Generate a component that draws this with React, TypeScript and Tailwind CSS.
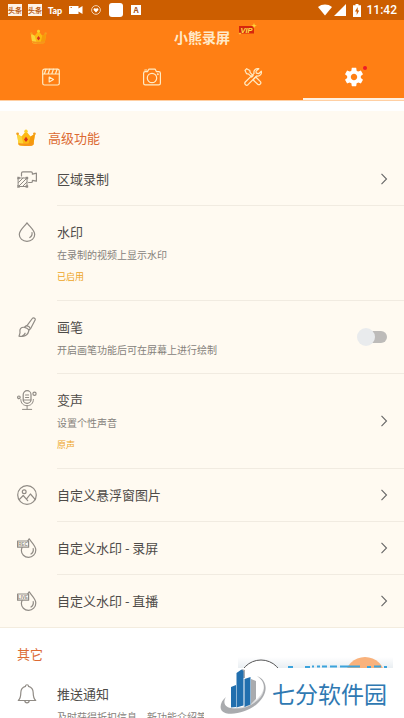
import React, { useState } from "react";

type IconProps = { className?: string };

function Crown({ className }: IconProps) {
  return (
    <svg viewBox="0 0 20 18" className={className} aria-hidden="true">
      <path d="M2.600 15.500 1 5l4.500 2.500L10 2l4.500 5.500L19 5l-1.600 10.500c0 2-14.800 2-14.800 0z" fill="#fdb913" />
      <path d="M2.600 15.500 1 5l4.500 2.500L8 16.800c-3 0-5.400-.4-5.400-1.300z" fill="#fbd53a" />
      <path d="M17.400 15.500 19 5l-4.500 2.500-2.500 9.300c3 0 5.400-.4 5.400-1.300z" fill="#f59a0b" />
      <path d="M2.400 13.800c3.200 1.200 12 1.200 15.200 0l-.3 2c-2.500 1.500-12 1.500-14.600 0z" fill="#f7941d" />
      <circle cx="10" cy="2.300" r="1.700" fill="#fcd02c" />
      <circle cx="1.600" cy="4.800" r="1.400" fill="#f4a01c" />
      <circle cx="18.400" cy="4.800" r="1.400" fill="#f4a01c" />
      <path d="M10 7.800l2 2.600-2 2.600-2-2.600z" fill="#d8341c" />
    </svg>
  );
}

function LineIcon({ className, children }: { className?: string; children: React.ReactNode }) {
  return (
    <svg
      viewBox="0 0 20 20"
      className={className}
      fill="none"
      stroke="currentColor"
      strokeWidth="1.200"
      strokeLinecap="round"
      strokeLinejoin="round"
      aria-hidden="true"
    >
      {children}
    </svg>
  );
}

const icons = {
  region: (
    <>
      <path d="M4.500 7V4.200c0-.9.500-1.400 1.400-1.400h8.200c.9 0 1.300.5 1.300 1.400v1l4-1v8l-4-.9v.9c0 .8-.4 1.300-1.300 1.300h-2.500" />
      <path d="M1.500 9h8.500v8.500H1.500zM1.500 13.500 6 9M1.500 17.500 10 9M5.500 17.500l4.500-4.500" strokeWidth="1" />
      <path d="M.5 8h2v2h-2zM9 8h2v2H9zM.5 16.500h2v2h-2zM9 16.500h2v2H9z" fill="currentColor" strokeWidth=".4" />
    </>
  ),
  drop: (
    <>
      <path d="M10 .8C7.500 4.500 2.300 8.300 2.300 12.400c0 4 3.400 6.900 7.700 6.900s7.700-2.900 7.700-6.900C17.700 8.300 12.500 4.500 10 .8z" />
      <path d="M15 10.500c.4 2.300-.4 4-2.200 5" />
    </>
  ),
  brush: (
    <>
      <path d="M10 8.700 15.300 1.500c.8-1 3.500-.4 2.800 1.500l-4.300 8.300" />
      <path d="M9.200 8.700c1.800.2 3.600 1.300 4.300 3l-1.600 1.200c-1.300-1.500-2.700-2.300-4.400-2.600z" />
      <path d="M7.500 10.300C4 9.800 2.500 12.200 3 14.800c.2 1.600-.5 2.700-1 4.400 3.700.6 9.300.3 9.900-6.300M5.500 18.800c1.500-.6 2.200-1.400 2.600-2.600" />
    </>
  ),
  mic: (
    <>
      <rect x="6.200" y=".7" width="7.800" height="12.600" rx="3.900" />
      <path d="M3.800 9.500c0 4 2.800 6.200 6.300 6.200s6.300-2.200 6.300-6.200M10.100 15.700v3.500M5.500 19.400h9.200M8.500 5h3.200M8.500 7.500h3.200M6.200 10H14" strokeWidth="1" />
      <circle cx="1.900" cy="7.300" r="1.300" />
      <circle cx="17.500" cy="3.800" r="1.600" />
    </>
  ),
  picture: (
    <>
      <circle cx="10" cy="10" r="9.300" />
      <circle cx="7.200" cy="6.800" r="1.900" />
      <path d="m2.200 14.700 4-4.200 3.200 3.700 4-5.200 4.900 5.700M9.400 14.200l1.300 1.500" />
    </>
  ),
  bell: (
    <>
      <path d="M8.500 2.300C8.500.2 11.500.2 11.500 2.300c3.400.8 4.700 3.300 4.700 6.500 0 4.500.8 6.200 2.500 7.700H1.300c1.700-1.500 2.500-3.200 2.500-7.700 0-3.200 1.300-5.700 4.700-6.500z" />
      <path d="M7.800 16.600c.2 2.900 4.200 2.900 4.400 0" />
    </>
  ),
};

function TagDrop({ tag }: { tag: string }) {
  return (
    <>
      <path d="M12.200.8c-.6 1-1 1.500-1.500 2.200M12.200.8c2.200 3.500 6.600 6.800 6.600 11.200 0 4-3.200 7.300-7.200 7.300-4.300 0-7.300-3.300-7.200-6.800 0-1.100.2-2 .7-3" />
      <path d="M16.200 10.500c.5 2.500-.3 4.300-2.200 5.500" />
      <rect x=".6" y="3" width="11" height="6.200" />
      <text x="6.100" y="7.700" fontSize="4.500" fontWeight="700" textAnchor="middle" fill="currentColor" stroke="none" fontFamily="Liberation Sans">
        {tag}
      </text>
    </>
  );
}

function Chevron() {
  return (
    <svg viewBox="0 0 8 12" className="h-3 w-2" fill="none" stroke="#666" strokeWidth="1.100" aria-hidden="true">
      <path d="m1.500.8 5 5.200-5 5.200" />
    </svg>
  );
}

type RowProps = {
  icon: React.ReactNode;
  title: string;
  desc?: string;
  status?: string;
  end?: React.ReactNode;
  last?: boolean;
};

function Row({ icon, title, desc, status, end, last }: RowProps) {
  return (
    <div className="flex gap-5 pl-[17px]">
      <LineIcon className="mt-4 size-5 shrink-0 text-[#908b85]">{icon}</LineIcon>
      <div
        className={
          last
            ? "flex min-w-0 flex-1 items-center justify-between pr-4"
            : "flex min-w-0 flex-1 items-center justify-between border-b border-[#f1ebe1] pr-4"
        }
      >
        <div className={desc ? "pt-4 pb-[14px]" : "py-4"}>
          <h3 className="text-[13px] leading-5 text-[#4e4b48]">{title}</h3>
          {desc && <p className="mt-1 text-[10px] leading-[18px] whitespace-nowrap text-[#86827c]">{desc}</p>}
          {status && <p className="mt-1 text-[9px] leading-[18px] text-[#eda51f]">{status}</p>}
        </div>
        {end}
      </div>
    </div>
  );
}

function LinkRow(props: RowProps) {
  return (
    <button type="button" className="block w-full text-left">
      <Row {...props} end={<Chevron />} />
    </button>
  );
}

function StatusBar() {
  return (
    <div className="flex h-5 items-center justify-between bg-[#cc5e00] pr-[7px] pl-2 text-white">
      <div className="flex items-center">
        <span className="flex h-3 w-[14px] items-center justify-center bg-[#fff3e6] text-[7px] leading-none font-bold text-[#b95b12]">头条</span>
        <span className="ml-[6px] flex h-3 w-[14px] items-center justify-center bg-[#fff3e6] text-[7px] leading-none font-bold text-[#b95b12]">头条</span>
        <span className="ml-[6px] w-[15px] font-[Lato] text-[9px] leading-none font-black">Tap</span>
        <svg viewBox="0 0 14 10" className="ml-[6px] h-[10px] w-[14px]" fill="#fff" aria-hidden="true">
          <path d="M0 1h9.500v2.500L13.500 1v8l-4-2.500V9H0z" />
          <path d="M1.500 2.500h1.500" stroke="#cc5e00" strokeWidth=".8" />
        </svg>
        <svg viewBox="0 0 10 10" className="ml-2 size-[10px]" fill="none" stroke="#f6d9bd" aria-hidden="true">
          <circle cx="5" cy="5" r="4.400" strokeWidth=".9" />
          <path d="M5 7.500 2.600 5c-.4-1.800 1.500-2.400 2.400-1.200.9-1.200 2.800-.6 2.400 1.200z" fill="#fff" stroke="none" />
        </svg>
        <span className="ml-2 size-[14px] rounded-[3px] bg-white" />
        <span className="ml-2 flex size-[10px] items-center justify-center bg-white text-[8px] leading-none font-bold text-[#a8561a]">A</span>
      </div>
      <div className="flex items-center">
        <svg viewBox="0 0 14 12" className="h-3 w-[14px]" fill="#fff" aria-hidden="true">
          <path d="M0 3c4-3.300 10-3.300 14 0L7 11.500z" />
        </svg>
        <svg viewBox="0 0 12 12" className="ml-[2px] size-3" fill="#fff" aria-hidden="true">
          <path d="M12 0v12H0z" />
        </svg>
        <svg viewBox="0 0 8 13" className="ml-[7px] h-[13px] w-2" aria-hidden="true">
          <path d="M2.500 0h3v1.300H8V13H0V1.300h2.500z" fill="#fff" />
          <path d="M4.700 3 2 7.500h1.700V11L6.200 6.500H4.700z" fill="#cc5e00" />
        </svg>
        <span className="ml-[6px] font-[Roboto] text-xs leading-none font-medium">11:42</span>
      </div>
    </div>
  );
}

const tabs = [
  {
    label: "视频",
    icon: (
      <>
        <rect x="1.700" y="2.200" width="16.600" height="15.800" rx="1.800" />
        <path d="M1.700 7h16.600M5 2.200 3.500 6.500M8.700 2.200 7.200 6.500M12.400 2.200l-1.500 4.300M16.100 2.200l-1.500 4.300M8.200 10l4.300 2.400-4.300 2.500z" />
      </>
    ),
  },
  {
    label: "图片",
    icon: (
      <>
        <path d="M3.200 4.700h2.300l1.300-2.500h6.400l1.300 2.500h2.300c1 0 1.600.6 1.600 1.600v10c0 1-.6 1.600-1.600 1.600H3.200c-1 0-1.600-.6-1.600-1.600v-10c0-1 .6-1.600 1.600-1.600zM2.800 3h2" />
        <circle cx="10" cy="11" r="4.700" />
        <circle cx="15.800" cy="7.200" r=".4" />
      </>
    ),
  },
  {
    label: "工具",
    icon: (
      <>
        <path d="M2 3.500 3.700 1.700l3.100 1.900.4 2.100 3 3-1.500 1.500-3-3-2.100-.5z" />
        <path d="m11.200 11.500 1.600-1.500 4.600 4.600c1.400 1.700-1 4-2.700 2.700L10.200 13z" />
        <path d="M15.800 1.700c-3-.8-5.600 1.700-4.700 4.700L2.300 15c-1.500 1.800.9 4.300 2.700 2.700l8.700-8.800c3 .8 5.400-1.900 4.600-4.700l-2.600 2.500-2.400-.6-.3-2z" />
      </>
    ),
  },
];

function Header() {
  return (
    <header className="border-b border-[#ffcfa3] bg-[#ff7f14]">
      <div className="relative flex h-[34px] items-center justify-center">
        <Crown className="absolute left-[30px] h-4 w-[17px]" />
        <h1 className="relative text-sm leading-5 font-bold text-[#ffe9c8]">
          小熊录屏
          <svg viewBox="0 0 19 13" className="absolute -top-1 left-full ml-2 h-[13px] w-[19px]" aria-hidden="true">
            <path d="M1 3h15v7.500H1z" fill="#d6260d" />
            <text x="8.500" y="9.500" fontSize="7.500" fontWeight="700" fontStyle="italic" textAnchor="middle" fill="#ffe04a" fontFamily="Liberation Sans">
              VIP
            </text>
            <path d="m16 0 .7 2.100 2.100.7-2.100.7L16 5.600l-.7-2.100-2.100-.7 2.100-.7zM2 9l.4 1.100 1.100.4-1.100.4L2 12l-.4-1.100-1.100-.4 1.100-.4z" fill="#ffd83a" />
          </svg>
        </h1>
      </div>
      <nav className="grid h-[46px] grid-cols-4">
        {tabs.map((tab) => (
          <button key={tab.label} type="button" aria-label={tab.label} className="flex items-center justify-center text-[#ffebc4]">
            <LineIcon className="size-5">{tab.icon}</LineIcon>
          </button>
        ))}
        <button type="button" aria-label="设置" aria-current="page" className="flex items-center justify-center border-b-2 border-[#fff0df] pt-[2px]">
          <span className="relative">
            <svg viewBox="0 0 24 24" className="size-[22px]" fill="#fff" aria-hidden="true">
              <path d="M19.430 12.980c.04-.32.07-.64.07-.98s-.03-.66-.07-.98l2.110-1.650c.19-.15.24-.42.12-.64l-2-3.460c-.12-.22-.39-.3-.61-.22l-2.490 1c-.52-.4-1.080-.73-1.690-.98l-.38-2.650C14.460 2.180 14.250 2 14 2h-4c-.25 0-.46.18-.49.42l-.38 2.650c-.61.25-1.170.59-1.690.98l-2.490-1c-.23-.09-.49 0-.61.22l-2 3.460c-.13.22-.07.49.12.64l2.110 1.650c-.04.32-.07.65-.07.98s.03.66.07.98l-2.110 1.650c-.19.15-.24.42-.12.64l2 3.460c.12.22.39.3.61.22l2.490-1c.52.4 1.080.73 1.690.98l.38 2.650c.03.24.24.42.49.42h4c.25 0 .46-.18.49-.42l.38-2.650c.61-.25 1.170-.59 1.690-.98l2.490 1c.23.09.49 0 .61-.22l2-3.460c.12-.22.07-.49-.12-.64l-2.110-1.650zM12 15.500c-1.930 0-3.500-1.570-3.500-3.500s1.570-3.500 3.500-3.500 3.500 1.570 3.500 3.500-1.570 3.500-3.500 3.500z" />
            </svg>
            <span className="absolute top-0 -right-[2px] size-1 rounded-full bg-[#ee1c25]" />
          </span>
        </button>
      </nav>
    </header>
  );
}

function SiteBadge() {
  return (
    <div className="absolute right-0 bottom-0 w-[200px]">
      {/* banner strip above the logo */}
      <svg viewBox="0 0 155 11" className="ml-[34px] block h-[11px] w-[155px]" aria-hidden="true">
        <defs>
          <linearGradient id="strip" x1="0" y1="0" x2="0" y2="1">
            <stop offset="0" stopColor="#fff" />
            <stop offset="1" stopColor="#e9eef2" />
          </linearGradient>
        </defs>
        <path d="M0 0h155v11H0z" fill="url(#strip)" />
        <circle cx="127" cy="20" r="20" fill="#f9b27c" />
        <circle cx="23" cy="25" r="22" fill="#fff" stroke="#555" />
        <path d="M50 10h5M67 10h5M74 9.500h2M79 9.500h3M84 9.500h5M92 9.500h7M102 9.500h20M129 10h4M136 9.500h7M146 10h3" stroke="#3ba3dc" strokeWidth="2" />
      </svg>
      <div className="flex h-[50px] items-center bg-white pl-4">
        <svg viewBox="0 0 48 48" className="size-12 shrink-0" aria-hidden="true">
          <path d="M37 7c11 4 12 18 0 28C27 44 8 48 2 42c-3-4-1-10 4-14-3 5-2 10 5 11 8 1 18-2 25-8 9-8 11-17 1-24z" fill="#a9abae" />
          <path d="M38 8c7 6 6 14-1 21-8 8-18 11-26 10 9 2 19-1 27-8 8-7 8-18 0-23z" fill="#fff" opacity=".6" />
          <path d="M22 0l3 1v8h-3zM31 10l5 2v18l-5 5z" fill="#a9abae" />
          <path d="M11 18l5-2v22l-5 .5zM16.500 4l5-3.500V37l-5 1.500zM21.500.5 23.500 2v34.500l-2 .5zM24.500 10l6-2v27.500l-6 2.500z" fill="#216fae" />
        </svg>
        <strong className="ml-1 text-[23px] leading-none font-normal text-[#2f79b2]">七分软件园</strong>
      </div>
    </div>
  );
}

export default function App() {
  const [brush, setBrush] = useState(false);

  return (
    <div className="relative h-screen overflow-hidden bg-white font-['Noto_Sans_CJK_SC','Noto_Sans',sans-serif]">
      <StatusBar />
      <Header />

      {/* Advanced features */}
      <section className="mt-[10px] border-b border-[#f3ecdf] bg-[#fffaf1]">
        <div className="flex h-[42px] items-center gap-3 px-4 pt-3">
          <Crown className="h-[18px] w-5" />
          <h2 className="text-[13px] leading-5 text-[#dc6a33]">高级功能</h2>
        </div>
        <LinkRow icon={icons.region} title="区域录制" />
        <Row icon={icons.drop} title="水印" desc="在录制的视频上显示水印" status="已启用" />
        <Row
          icon={icons.brush}
          title="画笔"
          desc="开启画笔功能后可在屏幕上进行绘制"
          end={
            <input
              type="checkbox"
              role="switch"
              aria-label="画笔"
              checked={brush}
              onChange={(e) => setBrush(e.target.checked)}
              className="relative mr-px h-3 w-7 shrink-0 appearance-none rounded-full bg-[#bdbbb9] before:absolute before:-top-[3px] before:-left-[2px] before:size-[18px] before:rounded-full before:bg-[#e9ebed] checked:bg-[#ffb77a] checked:before:left-3 checked:before:bg-[#ff7f14]"
            />
          }
        />
        <LinkRow icon={icons.mic} title="变声" desc="设置个性声音" status="原声" />
        <LinkRow icon={icons.picture} title="自定义悬浮窗图片" />
        <LinkRow icon={<TagDrop tag="REC" />} title="自定义水印 - 录屏" />
        <LinkRow icon={<TagDrop tag="LIVE" />} title="自定义水印 - 直播" last />
      </section>

      {/* Others */}
      <section>
        <div className="flex h-10 items-center px-[17px] pt-3">
          <h2 className="text-[13px] leading-5 text-[#dc6a33]">其它</h2>
        </div>
        <Row icon={icons.bell} title="推送通知" desc="及时获得折扣信息、新功能介绍等" last />
      </section>

      <SiteBadge />
    </div>
  );
}
